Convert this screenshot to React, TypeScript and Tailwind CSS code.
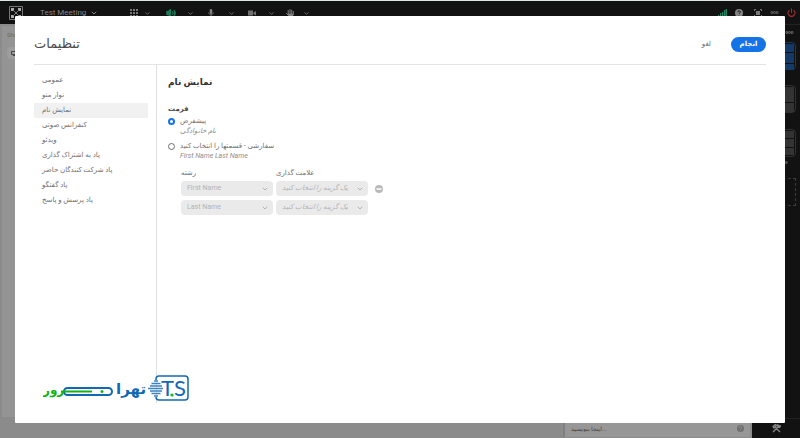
import { useState } from 'react'
import type { ReactNode } from 'react'
import { ChevronDown, Volume2, Power, Ellipsis } from 'lucide-react'

const secciones = [
  'عمومی',
  'نوار منو',
  'نمایش نام',
  'کنفرانس صوتی',
  'ویدئو',
  'پاد به اشتراک گذاری',
  'پاد شرکت کنندگان حاضر',
  'پاد گفتگو',
  'پاد پرسش و پاسخ',
]

const campos = ['First Name', 'Last Name']

function ToolButton({ label, className, children }: { label: string; className: string; children: ReactNode }) {
  return (
    <button aria-label={label} className={`flex h-3 shrink-0 items-center justify-between ${className}`}>
      {children}
      <ChevronDown size={7} strokeWidth={3} className="text-[#707070]" />
    </button>
  )
}

function HelpIcon({ size, fill, mark }: { size: number; fill: string; mark: string }) {
  return (
    <svg width={size} height={size} viewBox="0 0 16 16" aria-hidden="true">
      <circle cx="8" cy="8" r="8" fill={fill} />
      <path d="M5.5 6.2a2.5 2.5 0 1 1 3.6 2.2c-.8.4-1.1.8-1.1 1.6M8 12v1" fill="none" stroke={mark} strokeWidth="1.9" />
    </svg>
  )
}

function TopBar() {
  return (
    <header className="flex h-[23px] shrink-0 items-center bg-[#121212] text-[#707070]">
      <svg width="14" height="14" viewBox="0 0 14 14" className="ml-[9px] shrink-0" aria-hidden="true">
        <path d="M.5.5h13v13H.5z" fill="none" stroke="#777" />
        <path d="M2 2h3v3H2zM9 2h3v3H9zM2 9h3v3H2zM9 9h3v3H9z" fill="#aaa" />
        <path d="M4 4l6 6M10 4l-6 6" stroke="#777" />
      </svg>
      <button className="ml-[17px] flex w-[58px] shrink-0 items-center justify-between text-[8px] text-[#858585]">
        Test Meeting
        <ChevronDown size={8} strokeWidth={3} />
      </button>
      <div className="ml-8 flex pt-px">
        <ToolButton label="Layouts" className="w-[21px]">
          <svg width="8" height="8" viewBox="0 0 8 8" fill="#777" aria-hidden="true">
            <path d="M0 0h2v2H0zM3 0h2v2H3zM6 0h2v2H6zM0 3h2v2H0zM3 3h2v2H3zM6 3h2v2H6zM0 6h2v2H0zM3 6h2v2H3zM6 6h2v2H6z" />
          </svg>
        </ToolButton>
        <ToolButton label="Speaker" className="ml-[15px] w-7 text-[#1c7a5a]"><Volume2 size={10} strokeWidth={3} fill="currentColor" /></ToolButton>
        <ToolButton label="Microphone" className="ml-[14px] w-[27px]">
          <svg width="6" height="8" viewBox="0 0 6 8" aria-hidden="true">
            <rect x="1.700" y="0" width="2.600" height="5" rx="1.300" fill="#808080" />
            <path d="M.7 3.500c0 3 4.600 3 4.600 0M3 5.800V8" fill="none" stroke="#808080" strokeWidth=".8" />
          </svg>
        </ToolButton>
        <ToolButton label="Camera" className="ml-3 w-7">
          <svg width="9" height="8" viewBox="0 0 9 8" fill="#707070" aria-hidden="true"><path d="M1 1.500h5v5H1zM6.500 3.500L9 2v4.500L6.500 5z" /></svg>
        </ToolButton>
        <ToolButton label="Raise hand" className="ml-[11px] w-6">
          <svg width="8" height="9" viewBox="0 0 8 9" fill="#808080" stroke="#808080" aria-hidden="true">
            <path d="M2.200 1.500v4M4 .5v5M5.700 1.200v4.300M7.300 2.500v3M.5 4.500l2 2" strokeWidth="1" strokeLinecap="round" />
            <path d="M1.700 4.800h6L6.500 8.500h-3z" stroke="none" />
          </svg>
        </ToolButton>
      </div>
      <div className="ml-auto mr-1 flex items-center gap-2">
        <svg width="9" height="8" viewBox="0 0 9 8" fill="#1f8562" aria-label="Connection">
          <path d="M0 6h1.300v2H0zM2 4h1.300v4H2zM4 3h1.300v5H4zM6 1h1.300v7H6zM7.700 0H9v8H7.700z" />
        </svg>
        <button aria-label="Help"><HelpIcon size={8} fill="#858585" mark="#121212" /></button>
        <button aria-label="Fullscreen" className="ml-[3px]">
          <svg width="8" height="8" viewBox="0 0 8 8" aria-hidden="true">
            <path d="M.5 2V.5H2M6 .5h1.500V2M7.500 6v1.500H6M2 7.500H.5V6" fill="none" stroke="#777" />
            <path d="M2 2h4v4H2z" fill="#777" />
          </svg>
        </button>
        <button aria-label="More"><Ellipsis size={9} strokeWidth={5} /></button>
        <button aria-label="End" className="text-[#a02c2c]"><Power size={9} strokeWidth={3} /></button>
      </div>
    </header>
  )
}

function LayoutPanel() {
  return (
    <aside className="flex w-12 shrink-0 flex-col bg-[#121212]">
      <div className="flex h-[15px] items-center justify-end border-t border-[#222] pr-[6px] text-[#777]"><Ellipsis size={9} strokeWidth={5} /></div>
      <div className="mr-1 mt-[3px] grid h-[28px] grid-rows-[8px_10px_6px] gap-px rounded-sm border border-[#173a66] p-px">
        <div className="bg-[#163a68]" /><div className="bg-[#163a68]" /><div className="bg-[#163a68]" />
      </div>
      <div className="mr-1 mt-[15px] grid h-[28px] grid-rows-[15px_9px] gap-px rounded-sm border border-[#303030] p-px">
        <div className="bg-[#333]" /><div className="bg-[#333]" />
      </div>
      <div className="mr-1 mt-4 grid h-[28px] grid-rows-[7px_8px_7px] gap-px rounded-sm border border-[#303030] p-px">
        <div className="bg-[#333]" /><div className="bg-[#333]" /><div className="bg-[#333]" />
      </div>
      <div className="ml-7 mt-1 h-[3px] w-2 rounded-sm bg-[#4a4a4a]" />
      <div className="mr-1 mt-[14px] h-[28px] border border-dashed border-[#3c3c3c]" />
      <div className="mt-auto flex h-5 items-center justify-center border-t border-[#222]">
        <svg width="9" height="9" viewBox="0 0 9 9" fill="none" stroke="#888" strokeWidth="1.400" aria-label="Tools">
          <path d="M1 8l5-5M3 3l5 5M1 2.500l2.500-2 1 1-2.500 2.500zM6 3V1l1 1h1.500L7.500 3.500z" />
        </svg>
      </div>
    </aside>
  )
}

function Logo() {
  return (
    <svg width="148" height="30" viewBox="0 0 148 30" aria-label="T.S تهران سرور">
      <g fontFamily="'DejaVu Sans', sans-serif" fontWeight="700">
        <text x="0" y="21" fontSize="12" fill="#12b312">رور</text>
        <text x="73" y="21" fontSize="15" fill="#1268b3">تهرا</text>
      </g>
      <rect x="21" y="15" width="48" height="7" rx="3.500" fill="none" stroke="#1268b3" strokeWidth="2" />
      <path d="M18 18.500h31" stroke="#12b312" strokeWidth="2" />
      <circle cx="59" cy="18.500" r="1.500" fill="#12b312" />
      <path d="M113 7v-1q0-3 3-3h26q3 0 3 3v18q0 3-3 3h-26q-3 0-3-3" fill="none" stroke="#1268b3" strokeWidth="1.500" />
      <path d="M111 8h4M108.500 10.500h9M107 13h12M105 15.500h15M107 18h12M108.500 20.500h9M111 23h4" stroke="#3b82c0" strokeWidth="1.700" />
      <g fontFamily="Lato, sans-serif" fontWeight="400" fill="#1268b3" fontSize="22">
        <text x="118" y="23">T</text>
        <text x="131" y="23">S</text>
      </g>
      <circle cx="129" cy="22" r="1.600" fill="#12b312" />
    </svg>
  )
}

export default function App() {
  const [activa, setActiva] = useState('نمایش نام')
  const [formato, setFormato] = useState('default')

  return (
    <div className="relative flex h-screen flex-col overflow-hidden border-t border-[#dfe5e5] bg-[#8b8b8b] [font-family:Roboto,'DejaVu_Sans',sans-serif]">
      <TopBar />
      <div className="flex min-h-0 flex-1">
        <div className="flex min-w-0 flex-1 flex-col">
          <div className="m-[2px] flex-1 bg-[#949494] pl-[5px] pt-1 text-[6px] text-[#666]">
            <p>Share</p>
            <div className="mt-2 flex h-3 w-5 items-center rounded-sm bg-[#9d9d9d] pl-1">
              <svg width="6" height="5" viewBox="0 0 6 5" fill="none" stroke="#444" aria-hidden="true"><path d="M.5.5h5v3h-5zM2 4.500h2" /></svg>
            </div>
          </div>
          <div className="flex h-[19px] shrink-0 pb-px">
            <div className="flex-1" />
            <div className="mr-[2px] flex w-[187px] items-center justify-between border-l-2 border-[#808080] bg-[#979797] px-[6px] text-[6px] text-[#444]">
              <input aria-label="Chat" placeholder="اینجا بنویسید..." className="w-24 bg-transparent outline-none placeholder:text-[#444]" />
              <HelpIcon size={7} fill="#707070" mark="#979797" />
            </div>
          </div>
        </div>
        <LayoutPanel />
      </div>

      <div role="dialog" aria-label="تنظیمات" className="absolute inset-x-[15px] bottom-[15px] top-[15px] flex flex-col rounded-[1px] bg-white px-[19px] text-[#6e6e6e]">
        <div className="flex h-[49px] shrink-0 items-center justify-between border-b border-[#e4e4e4] pt-2">
          <h1 className="text-[13px] text-[#4b4b4b]">تنظیمات</h1>
          <div className="flex items-center gap-5 text-[7px]">
            <button>لغو</button>
            <button className="h-[15px] w-[35px] rounded-full bg-[#1473e6] font-bold text-white">انجام</button>
          </div>
        </div>
        <div className="flex min-h-0 flex-1 pb-5">
          <div className="flex w-[123px] shrink-0 flex-col border-r border-[#e0e0e0] pr-2">
            <nav className="flex flex-col pt-2">
              {secciones.map((s) => (
                <button key={s} onClick={() => setActiva(s)} className={`flex h-[15px] items-center pl-2 text-[7px] ${activa === s ? 'bg-[#f1f1f1]' : ''}`}>{s}</button>
              ))}
            </nav>
          </div>
          <main className="flex-1 pl-[11px] pt-[9px] text-[7px]">
            <h2 className="text-[9px] font-bold leading-4 text-[#323232]">نمایش نام</h2>
            <fieldset aria-labelledby="formato" className="pt-3">
              <p id="formato" className="font-bold leading-[14px] text-[#4b4b4b]">فرمت</p>
              <label className="grid grid-cols-[7px_1fr] items-center gap-x-[5px] leading-[10px]">
                <input type="radio" name="formato" checked={formato === 'default'} onChange={() => setFormato('default')} className="size-[7px] appearance-none rounded-full border border-[#6e6e6e] checked:border-2 checked:border-[#1473e6]" />
                <span>پیشفرض</span>
                <em className="col-start-2 text-[#8e8e8e]">نام خانوادگی</em>
              </label>
              <label className="mt-[5px] grid grid-cols-[7px_1fr] items-center gap-x-[5px] leading-[10px]">
                <input type="radio" name="formato" checked={formato === 'custom'} onChange={() => setFormato('custom')} className="size-[7px] appearance-none rounded-full border border-[#6e6e6e] checked:border-2 checked:border-[#1473e6]" />
                <span>سفارشی - قسمتها را انتخاب کنید</span>
                <em className="col-start-2 text-[#8e8e8e]">First Name Last Name</em>
              </label>
            </fieldset>
            <div className="ml-[13px] mt-2 grid grid-cols-[92px_92px_12px] items-center gap-x-[3px] gap-y-1">
              <span className="leading-[8px]">رشته</span>
              <span className="col-span-2 leading-[8px]">علامت گذاری</span>
              {campos.map((c, i) => (
                <div key={c} className="contents">
                  <div className="relative text-[#b3b3b3]">
                    <select disabled aria-label="رشته" className="block h-[15px] w-full appearance-none rounded-sm bg-[#eaeaea] pl-[6px] text-[7px] opacity-100">
                      <option>{c}</option>
                    </select>
                    <ChevronDown size={8} strokeWidth={3} className="absolute right-1 top-1" />
                  </div>
                  <div className="relative text-[#b3b3b3]">
                    <select disabled aria-label="علامت گذاری" className="block h-[15px] w-full appearance-none rounded-sm bg-[#eaeaea] pl-[6px] text-[7px] italic opacity-100">
                      <option>یک گزینه را انتخاب کنید</option>
                    </select>
                    <ChevronDown size={8} strokeWidth={3} className="absolute right-1 top-1" />
                  </div>
                  {i === 0 ? (
                    <button disabled aria-label="حذف" className="pl-1">
                      <svg width="8" height="8" viewBox="0 0 8 8" aria-hidden="true"><circle cx="4" cy="4" r="4" fill="#b9b9b9" /><path d="M1.500 4h5" stroke="#fff" strokeWidth="1.500" /></svg>
                    </button>
                  ) : <span />}
                </div>
              ))}
            </div>
          </main>
        </div>
        <footer className="absolute bottom-5 left-[28px]"><Logo /></footer>
      </div>
    </div>
  )
}
